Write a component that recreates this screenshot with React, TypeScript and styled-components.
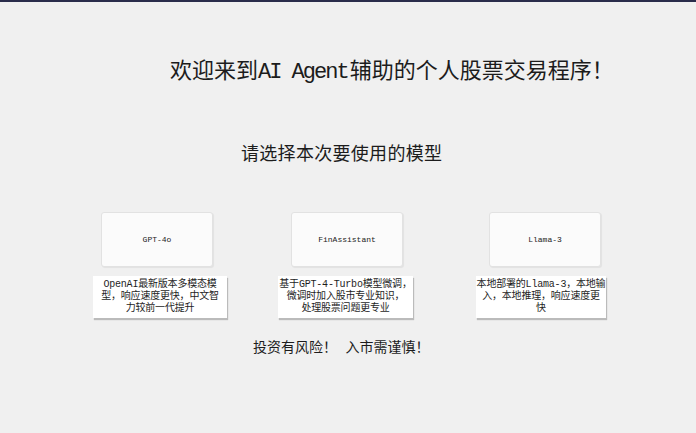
import styled, { createGlobalStyle } from "styled-components";

const GlobalStyle = createGlobalStyle`
  html, body {
    margin: 0;
    padding: 0;
    background: #f0f0f0;
  }
  body {
    font-family: "Liberation Mono", "Noto Sans CJK SC", monospace;
    color: #1e1e1e;
  }
`;

type Model = {
  name: string;
  lines: string[];
  width: number;
  gapBefore: number;
  buttonInset: number;
};

const models: Model[] = [
  {
    name: "GPT-4o",
    lines: ["OpenAI最新版本多模态模", "型，响应速度更快，中文智", "力较前一代提升"],
    width: 134,
    gapBefore: 0,
    buttonInset: 8,
  },
  {
    name: "FinAssistant",
    lines: ["基于GPT-4-Turbo模型微调，", "微调时加入股市专业知识，", "处理股票问题更专业"],
    width: 135,
    gapBefore: 51,
    buttonInset: 13,
  },
  {
    name: "Llama-3",
    lines: ["本地部署的Llama-3，本地输", "入，本地推理，响应速度更", "快"],
    width: 130,
    gapBefore: 63,
    buttonInset: 13,
  },
];

export default function App() {
  return (
    <>
      <GlobalStyle />
      <Window>
        <TopBar />
        <Title>
          欢迎来到<Latin>AI Agent</Latin>辅助的个人股票交易程序！
        </Title>
        <Subtitle>请选择本次要使用的模型</Subtitle>
        <ModelRow>
          {models.map((m) => (
            <ModelColumn key={m.name} $gap={m.gapBefore}>
              <ModelButton $inset={m.buttonInset}>{m.name}</ModelButton>
              <Description $width={m.width}>
                {m.lines.map((l) => (
                  <DescLine key={l}>{l}</DescLine>
                ))}
              </Description>
            </ModelColumn>
          ))}
        </ModelRow>
        <Warning>投资有风险！ 入市需谨慎！</Warning>
      </Window>
    </>
  );
}

const Window = styled.div`
  width: 696px;
  height: 433px;
  overflow: hidden;
  display: flex;
  flex-direction: column;
  background: #f0f0f0;
`;

const TopBar = styled.div`
  height: 2px;
  background: #2a2c4b;
  flex-shrink: 0;
`;

const Title = styled.div`
  margin-top: 60px;
  padding-left: 170px;
  font-size: 22px;
  line-height: 22px;
  white-space: nowrap;
  color: #1c1c1c;
`;

const Latin = styled.span`
  letter-spacing: -2px;
  margin-right: 2px;
`;

const Subtitle = styled.div`
  margin-top: 62px;
  padding-left: 241px;
  font-size: 18px;
  line-height: 18px;
  letter-spacing: 0.3px;
  color: #1c1c1c;
`;

const ModelRow = styled.div`
  margin-top: 48px;
  padding-left: 93px;
  display: flex;
`;

const ModelColumn = styled.div<{ $gap: number }>`
  margin-left: ${(p) => p.$gap}px;
  display: flex;
  flex-direction: column;
  align-items: flex-start;
  gap: 9px;
`;

const ModelButton = styled.div<{ $inset: number }>`
  margin-left: ${(p) => p.$inset}px;
  width: 112px;
  height: 55px;
  box-sizing: border-box;
  display: flex;
  align-items: center;
  justify-content: center;
  background: #fbfbfb;
  border: 1px solid #e2e2e2;
  border-radius: 3px;
  box-shadow: 1px 1px 1px rgba(0, 0, 0, 0.06);
  font-size: 8px;
  color: #222;
`;

const Description = styled.div<{ $width: number }>`
  width: ${(p) => p.$width}px;
  height: 42px;
  box-sizing: border-box;
  display: flex;
  flex-direction: column;
  align-items: center;
  justify-content: center;
  background: #ffffff;
  box-shadow: 1px 2px 1px rgba(0, 0, 0, 0.22);
  font-size: 10px;
  line-height: 12px;
  color: #1e1e1e;
`;

const DescLine = styled.div`
  white-space: nowrap;
  letter-spacing: -0.2px;
`;

const Warning = styled.div`
  margin-top: 23px;
  padding-left: 253px;
  font-size: 14px;
  line-height: 14px;
  color: #1c1c1c;
  white-space: pre;
`;
